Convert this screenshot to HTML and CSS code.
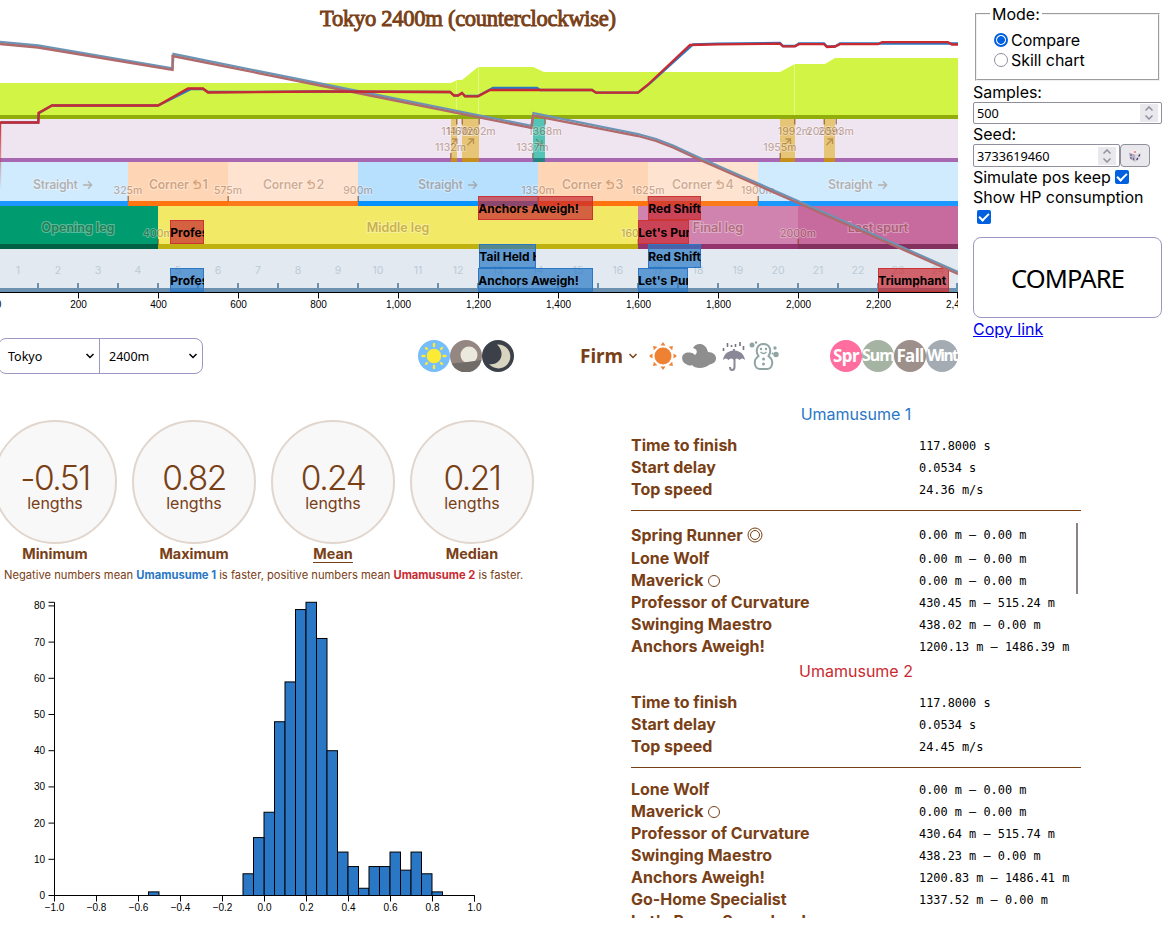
FILE: index.html
```
<!DOCTYPE html>
<html lang="en">
<head>
    <meta charset="UTF-8">
    <meta name="viewport" content="width=device-width, initial-scale=1.0">
    <title>Race Simulator</title>
    <link rel="stylesheet" href="styles.css">
</head>
<body>
    <main>
        <div class="top">
            <div class="track">
                <svg id="raceTrack" width="958" height="320" viewBox="0 0 958 320">
                    <text class="track-title" x="468" y="25.500" textLength="296">Tokyo 2400m (counterclockwise)</text>
                    <!-- elevation -->
                    <path fill="#d2f444" d="M0 83H451L457 80H462L478 67H533L544 72H780L795 64H825L835 58H958V115H0Z"/>
                    <path stroke="#fff" stroke-opacity=".35" d="M456.5 80V115M478.5 67V115M794.5 64V115"/>
                    <rect fill="#90ad0a" y="115" width="958" height="4"/>
                    <!-- slopes -->
                    <rect fill="#efe5f0" y="119" width="958" height="39"/>
                    <rect fill="#a768b1" y="158" width="958" height="4"/>
                    <g id="slopes"></g>
                    <g id="courseParts"></g>
                    <!-- sections -->
                    <rect fill="#e2e9f0" y="249" width="958" height="39"/>
                    <rect fill="#6b90b0" y="288" width="958" height="4"/>
                    <g id="sections"></g>
                    <g id="labels"></g>
                    <g id="marks"></g>
                    <g id="skills"></g>
                    <!-- hp -->
                    <g class="line">
                        <path stroke="#6c95b5" d="M0 42L38 45.500L172.500 68.500L173.500 54L330 85.500L531.500 126L533.500 113L638 134L656 139L673 145.500L700 158L798 201L958 272"/>
                        <path stroke="#b06a6c" d="M0 44L38 47.500L172.500 70V56L330 87.500L531.500 128L533 115.500L638 136L656 141L673 147.500L700 160L798 203L958 274"/>
                    </g>
                    <!-- speed -->
                    <defs>
                        <linearGradient id="fade" x1="0" y1="0" x2="0" y2="1">
                            <stop offset="0" stop-color="#ca2c35"/>
                            <stop offset="1" stop-color="#ca2c35" stop-opacity="0"/>
                        </linearGradient>
                    </defs>
                    <rect fill="url(#fade)" y="122" width="1.200" height="68"/>
                    <g class="line">
                        <path stroke="#2a77c5" d="M1 122.500H38L39 113L52 105.500H158L191 89H203L208 92L320 91.500L450 92L454 95.500H458L462 93L465 96H478L493 88H537L540 90H592L596 92.700H638L649 84L693 44.500L718 43.700L780 43L783 46H795L799 43.500H824L827 46.500H835L840 43.500H958"/>
                        <path stroke="#c92a30" d="M0 122.500H38.500V113L52 105.500H158L188 88.500H203L208 92.500L320 91.500L450 92L454 95.500H458L462 93L465 96.300H478L490 90H592L596 92.700H638L647 85.500L690 45L718 44.300L780 43.700L783 46.300H795L799 44.200H824L827 47L835 46.500L840 44.200H878L882 42.200H948L952 44.500H958"/>
                    </g>
                    <g id="raceAxis"></g>
                </svg>
                <div class="controls">
                    <div class="course-select">
                        <button class="course">Tokyo
                            <svg width="10" height="8" viewBox="0 0 10 8"><path class="chev" d="M1.500 2L5 5.500L8.500 2"/></svg>
                        </button>
                        <button class="distance">2400m
                            <svg width="10" height="8" viewBox="0 0 10 8"><path class="chev" d="M1.500 2L5 5.500L8.500 2"/></svg>
                        </button>
                    </div>
                    <div class="time-of-day">
                        <svg width="32" height="32" viewBox="0 0 32 32">
                            <circle cx="16" cy="16" r="16" fill="#75bdfb"/>
                            <circle cx="16" cy="16" r="7.300" fill="#fcea35"/>
                            <path stroke="#fcea35" stroke-width="2.400" stroke-linecap="round" d="M16 4v2M16 26v2M4.500 16h2M25.500 16h2M8 8l1 1M23 23l1 1M8 24l1-1M23 9l1-1"/>
                        </svg>
                        <svg width="32" height="32" viewBox="0 0 32 32">
                            <circle cx="16" cy="16" r="16" fill="#948680"/>
                            <circle cx="19" cy="15" r="8.500" fill="#ebe9de"/>
                            <path fill="#716c68" d="M1.500 23.500Q16 22.500 31.500 20A16 16 0 0 1 1.500 23.500Z"/>
                        </svg>
                        <svg width="32" height="32" viewBox="0 0 32 32">
                            <circle cx="16" cy="16" r="16" fill="#3c4049"/>
                            <path fill="#d8d4c0" d="M15 4.500A12 12 0 1 1 7 24C17 26 25 14 15 4.500Z"/>
                        </svg>
                    </div>
                    <div class="ground">Firm
                        <svg width="10" height="8" viewBox="0 0 10 8"><path class="chev" d="M1.500 2L5 5.500L8.500 2"/></svg>
                    </div>
                    <div class="weather">
                        <svg width="30" height="32" viewBox="0 0 30 32">
                            <g fill="#ef8133">
                                <circle cx="15" cy="16" r="8.500"/>
                                <path id="ray" d="M12.500 5.500L15 2l2.500 3.500Z"/>
                                <use href="#ray" transform="rotate(45 15 16)"/>
                                <use href="#ray" transform="rotate(90 15 16)"/>
                                <use href="#ray" transform="rotate(135 15 16)"/>
                                <use href="#ray" transform="rotate(180 15 16)"/>
                                <use href="#ray" transform="rotate(225 15 16)"/>
                                <use href="#ray" transform="rotate(270 15 16)"/>
                                <use href="#ray" transform="rotate(315 15 16)"/>
                            </g>
                        </svg>
                        <svg width="36" height="32" viewBox="0 0 36 32">
                            <path fill="#8e8e8f" d="M7 25C-1 23 -1 12 8 12.500Q12 12 14 15Q17 13 15 9.500Q13 8 12 8C15 2 25 2 27 12C37 12 38 23 28.500 24.500C24 29 14 29 11 25Q9 26 7 25Z"/>
                        </svg>
                        <svg class="umbrella" width="24" height="32" viewBox="0 0 24 32">
                            <path fill="#8a8797" d="M1 20C2 13 7 11 11 10.500V9h2v1.500C17 11 22 13 23 20Q20 17 17.500 20Q15 17 12 20Q9 17 6.500 20Q4 17 1 20Z"/>
                            <path fill="none" stroke="#8a8797" stroke-width="2" d="M12.500 17V27Q12.500 30 10 30Q8 30 8 27"/>
                            <path stroke="#77747f" stroke-width="1.600" d="M1.500 8v3M5.500 3v4M9.500 5v2M13.500 4v3M18 2v4M21.500 6v4"/>
                        </svg>
                        <svg width="30" height="32" viewBox="0 0 30 32">
                            <g fill="none" stroke="#90a5a3" stroke-width="2">
                                <path d="M9.500 16C6 11 8 4 14.500 4S23 11 19.500 16C26 21 23 29 18 29H11C6 29 3 21 9.500 16Z"/>
                                <path stroke-width="1.300" d="M11.500 12Q14.500 15 17.500 12"/>
                            </g>
                            <g fill="#90a5a3">
                                <circle cx="12" cy="9" r="1.200"/><circle cx="17" cy="9" r="1.200"/>
                                <circle cx="14.500" cy="19" r="1.500"/><circle cx="14.500" cy="24" r="1.500"/>
                                <circle cx="3" cy="5" r="2.500"/><circle cx="7" cy="2.500" r="1.200"/>
                                <circle cx="26" cy="8" r="1.700"/><circle cx="27" cy="14.500" r="2.700"/><circle cx="23.500" cy="13.500" r="1"/>
                            </g>
                        </svg>
                    </div>
                    <div class="seasons">
                        <span class="season spring">Spr</span>
                        <span class="season summer">Sum</span>
                        <span class="season fall">Fall</span>
                        <span class="season winter">Wint</span>
                    </div>
                </div>
            </div>
            <form class="run-pane">
                <fieldset>
                    <legend>Mode:</legend>
                    <label><input type="radio" name="mode" checked>Compare</label>
                    <label><input type="radio" name="mode">Skill chart</label>
                </fieldset>
                <label>Samples:</label>
                <div class="number-box">500
                    <span class="spin"><svg width="8" height="14" viewBox="0 0 8 14"><path class="chev" d="M.500 4.500L4 1L7.500 4.500M.500 9.500L4 13L7.500 9.500"/></svg></span>
                </div>
                <label>Seed:</label>
                <div class="seed-row">
                    <div class="number-box">3733619460
                        <span class="spin"><svg width="8" height="14" viewBox="0 0 8 14"><path class="chev" d="M.500 4.500L4 1L7.500 4.500M.500 9.500L4 13L7.500 9.500"/></svg></span>
                    </div>
                    <button type="button" class="dice">
                        <svg width="14" height="14" viewBox="0 0 14 14">
                            <path fill="#f6f2f5" d="M1 3.500L7 1L13 3L7.500 5.500Z"/>
                            <path fill="#b8b2c4" d="M1 3.500L7.500 5.500V13L2 10Z"/>
                            <path fill="#dedae2" d="M13 3L7.500 5.500V13L12.500 9.500Z"/>
                            <ellipse cx="7" cy="3" rx="1.500" ry=".800" fill="#e4606a"/>
                            <path stroke="#3d3566" stroke-width="1.400" stroke-linecap="round" d="M3 6v.1M5.500 10v.1M3 9v.1M11.500 6l-.5 1M9.500 9.500l-.5 1"/>
                        </svg>
                    </button>
                </div>
                <label class="check">Simulate pos keep<input type="checkbox" checked></label>
                <label class="check">Show HP consumption <input type="checkbox" checked></label>
                <button type="button" class="run">COMPARE</button>
                <a href="#">Copy link</a>
            </form>
        </div>

        <div class="results">
            <div class="summary">
                <div class="stats">
                    <div class="stat"><div class="circle"><b>-0.51</b>lengths</div><h3>Minimum</h3></div>
                    <div class="stat"><div class="circle"><b>0.82</b>lengths</div><h3>Maximum</h3></div>
                    <div class="stat"><div class="circle"><b>0.24</b>lengths</div><h3 class="selected">Mean</h3></div>
                    <div class="stat"><div class="circle"><b>0.21</b>lengths</div><h3>Median</h3></div>
                </div>
                <p class="note">Negative numbers mean <strong class="uma1">Umamusume 1</strong> is faster, positive numbers mean <strong class="uma2">Umamusume 2</strong> is faster.</p>
                <svg id="histogram" width="500" height="330" viewBox="0 0 500 330"></svg>
            </div>
            <div class="details">
                <section>
                    <h2 class="uma1">Umamusume 1</h2>
                    <dl>
                        <dt>Time to finish</dt><dd>117.8000 s</dd>
                        <dt>Start delay</dt><dd>0.0534 s</dd>
                        <dt>Top speed</dt><dd>24.36 m/s</dd>
                    </dl>
                    <dl class="skills first">
                        <dt class="tall">Spring Runner <svg width="16" height="16" viewBox="0 0 16 16"><circle cx="8" cy="8" r="7"/><circle cx="8" cy="8" r="4.500"/></svg></dt><dd class="tall">0.00 m – 0.00 m</dd>
                        <dt>Lone Wolf</dt><dd>0.00 m – 0.00 m</dd>
                        <dt>Maverick <i class="ring"></i></dt><dd>0.00 m – 0.00 m</dd>
                        <dt>Professor of Curvature</dt><dd>430.45 m – 515.24 m</dd>
                        <dt>Swinging Maestro</dt><dd>438.02 m – 0.00 m</dd>
                        <dt>Anchors Aweigh!</dt><dd>1200.13 m – 1486.39 m</dd>
                    </dl>
                </section>
                <section>
                    <h2 class="uma2">Umamusume 2</h2>
                    <dl>
                        <dt>Time to finish</dt><dd>117.8000 s</dd>
                        <dt>Start delay</dt><dd>0.0534 s</dd>
                        <dt>Top speed</dt><dd>24.45 m/s</dd>
                    </dl>
                    <dl class="skills">
                        <dt>Lone Wolf</dt><dd>0.00 m – 0.00 m</dd>
                        <dt>Maverick <i class="ring"></i></dt><dd>0.00 m – 0.00 m</dd>
                        <dt>Professor of Curvature</dt><dd>430.64 m – 515.74 m</dd>
                        <dt>Swinging Maestro</dt><dd>438.23 m – 0.00 m</dd>
                        <dt>Anchors Aweigh!</dt><dd>1200.83 m – 1486.41 m</dd>
                        <dt>Go-Home Specialist</dt><dd>1337.52 m – 0.00 m</dd>
                        <dt>Let's Pump Some Iron!</dt><dd></dd>
                    </dl>
                </section>
            </div>
        </div>
    </main>
    <script>
        const el = id => document.getElementById(id);
        // course metres -> px
        const mx = m => m * 0.4 - 2;

        // start, end, fill, band fill, label, label x
        const course = [
            [0, 325, '#d0eafe', '#1a98ff', 'Straight', 33],
            [325, 575, '#fed6b6', '#ff740f', 'Corner', 149, 1],
            [575, 900, '#fee3d0', '#fb7b1c', 'Corner', 263, 2],
            [900, 1350, '#b7dffe', '#0591ff', 'Straight', 418],
            [1350, 1625, '#fed6b6', '#ff740f', 'Corner', 562, 3],
            [1625, 1900, '#fee3d0', '#fb7b1c', 'Corner', 672, 4],
            [1900, 2400, '#d0eafe', '#1a98ff', 'Straight', 828]
        ];
        const legs = [
            [0, 400, '#009c6f', '#006144', 'Opening leg', 78],
            [400, 1600, '#f2e966', '#beb110', 'Middle leg', 398],
            [1600, 2000, '#d083af', '#94346e', 'Final leg', 718],
            [2000, 2400, '#c76b9f', '#833260', 'Last spurt', 878]
        ];
        let parts = '', labels = '';
        course.forEach(([a, b, fill, band, name, lx, n]) => {
            const x = Math.round(mx(a)), w = Math.round(mx(b)) - x;
            parts += `<rect x="${x}" y="162" width="${w}" height="39" fill="${fill}"/><rect x="${x}" y="201" width="${w}" height="5" fill="${band}"/>`;
            if (n) {
                labels += `<text x="${lx}" y="189" textLength="40">${name}</text><text x="${lx + 53.5}" y="189">${n}</text>
                    <path class="turn" d="M${lx + 47.5} 180l-2.800 2.500 2.800 2.500M${lx + 45} 182.500h3.500a2.900 2.900 0 0 1 0 5.800h-3.500"/>`;
            } else {
                labels += `<text x="${lx}" y="189" textLength="45">${name}</text>
                    <path class="turn" d="M${lx + 50} 185h8.500M${lx + 55} 181.200l3.700 3.800-3.700 3.800"/>`;
            }
        });
        legs.forEach(([a, b, fill, band, name, cx]) => {
            const x = mx(a), w = mx(b) - x;
            parts += `<rect x="${x}" y="206" width="${w}" height="38" fill="${fill}"/><rect x="${x}" y="244" width="${w}" height="5" fill="${band}"/>`;
            labels += `<text class="mid" x="${cx}" y="232">${name}</text>`;
        });
        el('courseParts').innerHTML = parts;
        el('labels').innerHTML = labels;

        // x, width, up / down
        const slopes = [[451, 6, 1], [462, 17, 1], [533, 12, 0], [780, 15, 1], [824, 11, 1]];
        el('slopes').innerHTML = slopes.map(([x, w, up]) =>
            `<rect x="${x}" y="119" width="${w}" height="39" fill="${up ? '#e6c577' : '#53c4b6'}"/>
             <rect x="${x}" y="158" width="${w}" height="4" fill="${up ? '#c58e1f' : '#258280'}"/>
             <path class="slope-arrow" d="${up ? `M${x + w / 2 - 3} 145l6-6m-5 0h5v5` : `M${x + w / 2 - 3} 139l6 6m-5 0h5v-5`}"/>`).join('');

        // label, x, baseline, tick y
        const marks = [
            ['1147m', 456.500, 135, 119], ['1160m', 462, 135, 119], ['1202m', 479, 135, 119], ['1368m', 545, 135, 119],
            ['1992m', 794.500, 135, 119], ['2065m', 824, 135, 119], ['2093m', 836, 135, 119],
            ['1132m', 450.500, 151, 153], ['1337m', 532.500, 151, 153], ['1955m', 780, 151, 153],
            ['325m', 128, 194, 196], ['575m', 228, 194, 196], ['900m', 358, 194, 196], ['1350m', 538, 194, 196],
            ['1625m', 648, 194, 196], ['1900m', 758, 194, 196],
            ['400m', 158, 237, 239], ['1600m', 638, 237, 239], ['2000m', 798, 237, 239]
        ];
        el('marks').innerHTML = marks.map(([t, x, y, ty]) =>
            `<text x="${x}" y="${y}">${t}</text><rect x="${x - 0.5}" y="${ty}" width="1.500" height="5.500"/>`).join('');

        let sections = '';
        for (let i = 1; i <= 24; i++) {
            sections += `<text x="${i * 40 - 22}" y="274">${i}</text><rect x="${Math.min(i * 40 - 3, 956)}" y="283" width="2" height="5"/>`;
        }
        el('sections').innerHTML = sections;

        const skills = [
            ['red', 170, 34, 220, 'Professor of Curvature'], ['red', 478, 115, 196, 'Anchors Aweigh!'],
            ['red', 648, 53, 196, 'Red Shift/LP1211-M'], ['red', 638, 51, 220, "Let's Pump Some Iron!"],
            ['red', 878, 71, 268, 'Triumphant'],
            ['blue', 170, 34, 268, 'Professor of Curvature'], ['blue', 479, 57, 244, 'Tail Held High'],
            ['blue', 478, 115, 268, 'Anchors Aweigh!'], ['blue', 648, 53, 244, 'Red Shift/LP1211-M'],
            ['blue', 638, 50, 268, "Let's Pump Some Iron!"]
        ];
        el('skills').innerHTML = skills.map(([c, x, w, y, name]) =>
            `<svg class="${c}" x="${x}" y="${y}" width="${w}" height="24"><rect x=".500" y=".500" width="${w - 1}" height="23"/><text x=".300" y="17">${name}</text></svg>`).join('');

        let axis = '<path stroke="#000" d="M0 292.500H958"/>';
        for (let m = 0; m <= 2400; m += 200) {
            const x = m === 2400 ? 957.5 : mx(m) + 0.5;
            axis += (m ? `<path stroke="#000" d="M${x} 293v5.500"/>` : '') + `<text x="${mx(m) + 0.5}" y="308">${m.toLocaleString('en-US')}</text>`;
        }
        el('raceAxis').innerHTML = axis;

        // histogram, 0.05 wide bins
        const bins = { '-11': 1 };
        [6, 16, 23, 48, 59, 79, 81, 71, 40, 12, 8, 2, 8, 8, 12, 7, 12, 6, 1].forEach((n, i) => bins[i - 2] = n);
        const y0 = 305.5, unit = 3.62;
        let hist = '';
        for (const b in bins) {
            hist += `<rect x="${264 + b * 10.5}" y="${y0 - bins[b] * unit}" width="10.500" height="${bins[b] * unit}"/>`;
        }
        hist += `<path d="M48.500 12.300H54.500V${y0}H474.500V311.500"/>`;
        for (let n = 0; n <= 80; n += 10) {
            hist += `<path d="M48.500 ${y0 - n * unit}h6"/><text class="y" x="45" y="${y0 + 3.5 - n * unit}">${n}</text>`;
        }
        for (let i = 0; i <= 10; i++) {
            const v = (i - 5) / 5;
            hist += `<path d="M${54.5 + i * 42} ${y0}v6"/><text x="${54.5 + i * 42}" y="321">${v.toFixed(1).replace('-', '−')}</text>`;
        }
        el('histogram').innerHTML = hist;
    </script>
</body>
</html>
```
FILE: styles.css
```
* {
    box-sizing: border-box;
}

body {
    margin: 0;
    height: 928px;
    overflow: hidden;
    background-color: white;
    font-family: Inter, sans-serif;
    font-size: 16px;
}

main {
    height: 918px;
    overflow: hidden;
}

svg {
    display: block;
}

.top {
    display: flex;
    gap: 15px;
    height: 402px;
}

.track {
    width: 958px;
}

/* race track */
.track-title {
    font-family: "Liberation Serif", serif;
    font-size: 22.6px;
    fill: #794016;
    stroke: #794016;
    stroke-width: 0.9;
    text-anchor: middle;
}

#labels {
    opacity: 0.33;
}

#labels text {
    font-size: 12.5px;
    font-weight: 600;
    fill: #794016;
    stroke: white;
    stroke-width: 2;
    paint-order: stroke;
}

#labels .mid {
    text-anchor: middle;
}

.turn {
    fill: none;
    stroke: #794016;
    stroke-width: 1.3;
}

.slope-arrow {
    fill: none;
    stroke: rgba(121, 64, 22, 0.4);
    stroke-width: 1.3;
}

#marks text {
    font-size: 10.5px;
    font-weight: 500;
    text-anchor: middle;
    fill: #794016;
    stroke: white;
    stroke-width: 1.5;
    paint-order: stroke;
    opacity: 0.37;
}

#marks rect {
    fill: rgba(121, 64, 22, 0.6);
}

#sections text {
    font-size: 10.5px;
    text-anchor: middle;
    fill: #bccbd8;
}

#sections rect {
    fill: #6b90b0;
}

#skills text {
    font-size: 12px;
    font-weight: 700;
}

#skills .red rect {
    fill: rgba(200, 40, 48, 0.7);
    stroke: #cc3333;
}

#skills .blue rect {
    fill: rgba(42, 119, 197, 0.7);
    stroke: #2a77c5;
}

.line path {
    fill: none;
    stroke-width: 2.3;
}

#raceAxis text {
    font-family: "Liberation Sans", sans-serif;
    font-size: 10px;
    text-anchor: middle;
}

/* controls under the track */
.controls {
    display: flex;
    align-items: center;
    height: 36px;
    margin-top: 18px;
}

.course-select {
    display: flex;
    width: 205px;
    margin-left: -2px;
    border: 1px solid #9c97c2;
    border-radius: 8px;
}

.course-select button {
    display: flex;
    align-items: center;
    justify-content: space-between;
    height: 34px;
    border: none;
    padding: 0 4px 0 9px;
    background: none;
    font-family: "Noto Sans", sans-serif;
    font-size: 12.5px;
}

.course-select .course {
    width: 101px;
    border-right: 1px solid #9c97c2;
}

.course-select .distance {
    flex: 1;
}

.chev {
    fill: none;
    stroke: currentColor;
    stroke-width: 1.5;
}

.time-of-day {
    display: flex;
    margin-left: 215px;
}

.ground {
    display: flex;
    align-items: center;
    gap: 5px;
    width: 68px;
    margin-left: 66px;
    color: #794016;
    font-family: "Noto Sans", sans-serif;
    font-size: 19px;
    font-weight: 700;
}

.weather {
    display: flex;
    width: 133px;
    gap: 3px;
}

.umbrella {
    margin-left: 2px;
}

.seasons {
    display: flex;
    margin-left: auto;
}

.season {
    width: 32px;
    height: 32px;
    border-radius: 50%;
    color: white;
    font-family: "Noto Sans", sans-serif;
    font-size: 17px;
    font-weight: 700;
    letter-spacing: -0.6px;
    line-height: 31px;
    display: flex;
    justify-content: center;
}

.spring { background-color: #ff6e9f; }
.summer { background-color: #a5b3a3; font-size: 16px; letter-spacing: -0.9px; }
.fall { background-color: #9d8f8a; }
.winter { background-color: #a4abb3; font-size: 15.5px; letter-spacing: -1.6px; }

/* run pane */
.run-pane {
    width: 189px;
    padding-top: 4px;
    line-height: 20px;
}

.run-pane fieldset {
    height: 77px;
    margin: 0 2px 1px;
    padding: 6px 12px 0 17px;
    border: 2px groove #f0f0f0;
}

.run-pane legend {
    margin-left: -4px;
    padding: 0 2px;
}

.run-pane label {
    display: block;
    letter-spacing: -0.05px;
}

.run-pane fieldset label {
    display: flex;
    align-items: center;
    gap: 3px;
}

input[type="radio"],
input[type="checkbox"] {
    appearance: none;
    display: inline-grid;
    place-content: center;
    width: 14px;
    height: 14px;
    margin: 0;
}

input[type="radio"] {
    border: 1px solid #8f8f9d;
    border-radius: 50%;
}

input[type="radio"]:checked {
    border: 2px solid #0060df;
    background: radial-gradient(circle, #0060df 3.5px, white 4.2px);
}

.check input[type="checkbox"] {
    margin: 3px 0 0 4px;
    border-radius: 2px;
    background-color: #0060df;
    vertical-align: top;
}

input[type="checkbox"]::before {
    content: "";
    width: 8px;
    height: 4px;
    border-left: 2px solid white;
    border-bottom: 2px solid white;
    transform: translateY(-1px) rotate(-45deg);
}

.number-box {
    display: flex;
    align-items: center;
    justify-content: space-between;
    height: 22px;
    padding: 0 3px;
    border: 1px solid #8f8f9d;
    border-radius: 2px;
    font-family: "Noto Sans", sans-serif;
    font-size: 12.7px;
}

.spin {
    display: flex;
    align-items: center;
    justify-content: center;
    width: 18px;
    height: 18px;
    background-color: #e9e9ed;
    color: #8f8f9d;
}

.seed-row {
    display: flex;
    height: 23px;
}

.seed-row .number-box {
    width: 147px;
    height: 23px;
}

.dice {
    display: flex;
    align-items: center;
    justify-content: center;
    width: 30px;
    padding: 0;
    border: 1px solid #8f8f9d;
    border-radius: 4px;
    background-color: #e9e9ed;
}

.run {
    display: block;
    width: 189px;
    height: 81px;
    margin: 10px 0 1px;
    border: 1px solid #9c97c2;
    border-radius: 8px;
    background-color: white;
    font-family: "Noto Sans", sans-serif;
    font-size: 25.5px;
    letter-spacing: -0.9px;
}

.run-pane a {
    color: #0000ee;
}

/* results */
.results {
    display: flex;
    align-items: flex-start;
}

.summary {
    width: 631px;
    padding-top: 18px;
    color: #794016;
}

.stats {
    display: flex;
    gap: 15px;
    margin-left: -7px;
}

.stat {
    width: 124px;
    height: 142px;
    text-align: center;
}

.circle {
    height: 124px;
    padding-top: 37px;
    border: 2px solid #e1d6cd;
    border-radius: 50%;
    background-color: #f8f8f8;
    line-height: 12px;
}

.circle b {
    display: block;
    font-size: 33.5px;
    font-weight: 350;
    letter-spacing: -1.5px;
    line-height: 38px;
}

.stat h3 {
    display: table;
    margin: 2px auto 0;
    font-size: 14.4px;
    line-height: 16px;
}

.stat .selected {
    border-bottom: 1px solid #794016;
}

.note {
    margin: 5px 0 0 4px;
    height: 23px;
    font-size: 11.2px;
    line-height: 16px;
    white-space: nowrap;
}

.uma1 { color: #2a77c5; }
.uma2 { color: #c92a30; }

#histogram rect {
    fill: #2a77c5;
    stroke: black;
}

#histogram path {
    fill: none;
    stroke: black;
}

#histogram text {
    font-family: "Liberation Sans", sans-serif;
    font-size: 10px;
    text-anchor: middle;
}

#histogram .y {
    text-anchor: end;
}

.details {
    width: 450px;
}

.details h2 {
    margin: 0;
    height: 32px;
    font-size: 16px;
    font-weight: 400;
    line-height: 24px;
    text-align: center;
}

dl {
    display: grid;
    grid-template-columns: 288px 1fr;
    align-content: start;
    margin: 0;
    line-height: 22px;
}

dt {
    height: 22px;
    color: #794016;
    font-weight: 700;
}

dd {
    margin: 0;
    padding-top: 1px;
    font-family: "DejaVu Sans Mono", monospace;
    font-size: 11.9px;
    white-space: pre;
    height: 22px;
    line-height: 22px;
}

dt.tall {
    height: 24px;
    display: flex;
    align-items: center;
    gap: 4px;
}

dd.tall {
    height: 24px;
}

dt svg {
    fill: none;
    stroke: #794016;
}

.ring {
    display: inline-block;
    width: 12px;
    height: 12px;
    margin-left: 1px;
    border: 1.8px solid #794016;
    border-radius: 50%;
    vertical-align: -1px;
}

.skills {
    margin-top: 10px;
    padding-top: 10px;
    border-top: 1px solid #794016;
}

.skills.first {
    height: 149px;
    padding-top: 12px;
    background: linear-gradient(#8d8385, #8d8385) 445px 12px / 2px 71px no-repeat;
}
```
